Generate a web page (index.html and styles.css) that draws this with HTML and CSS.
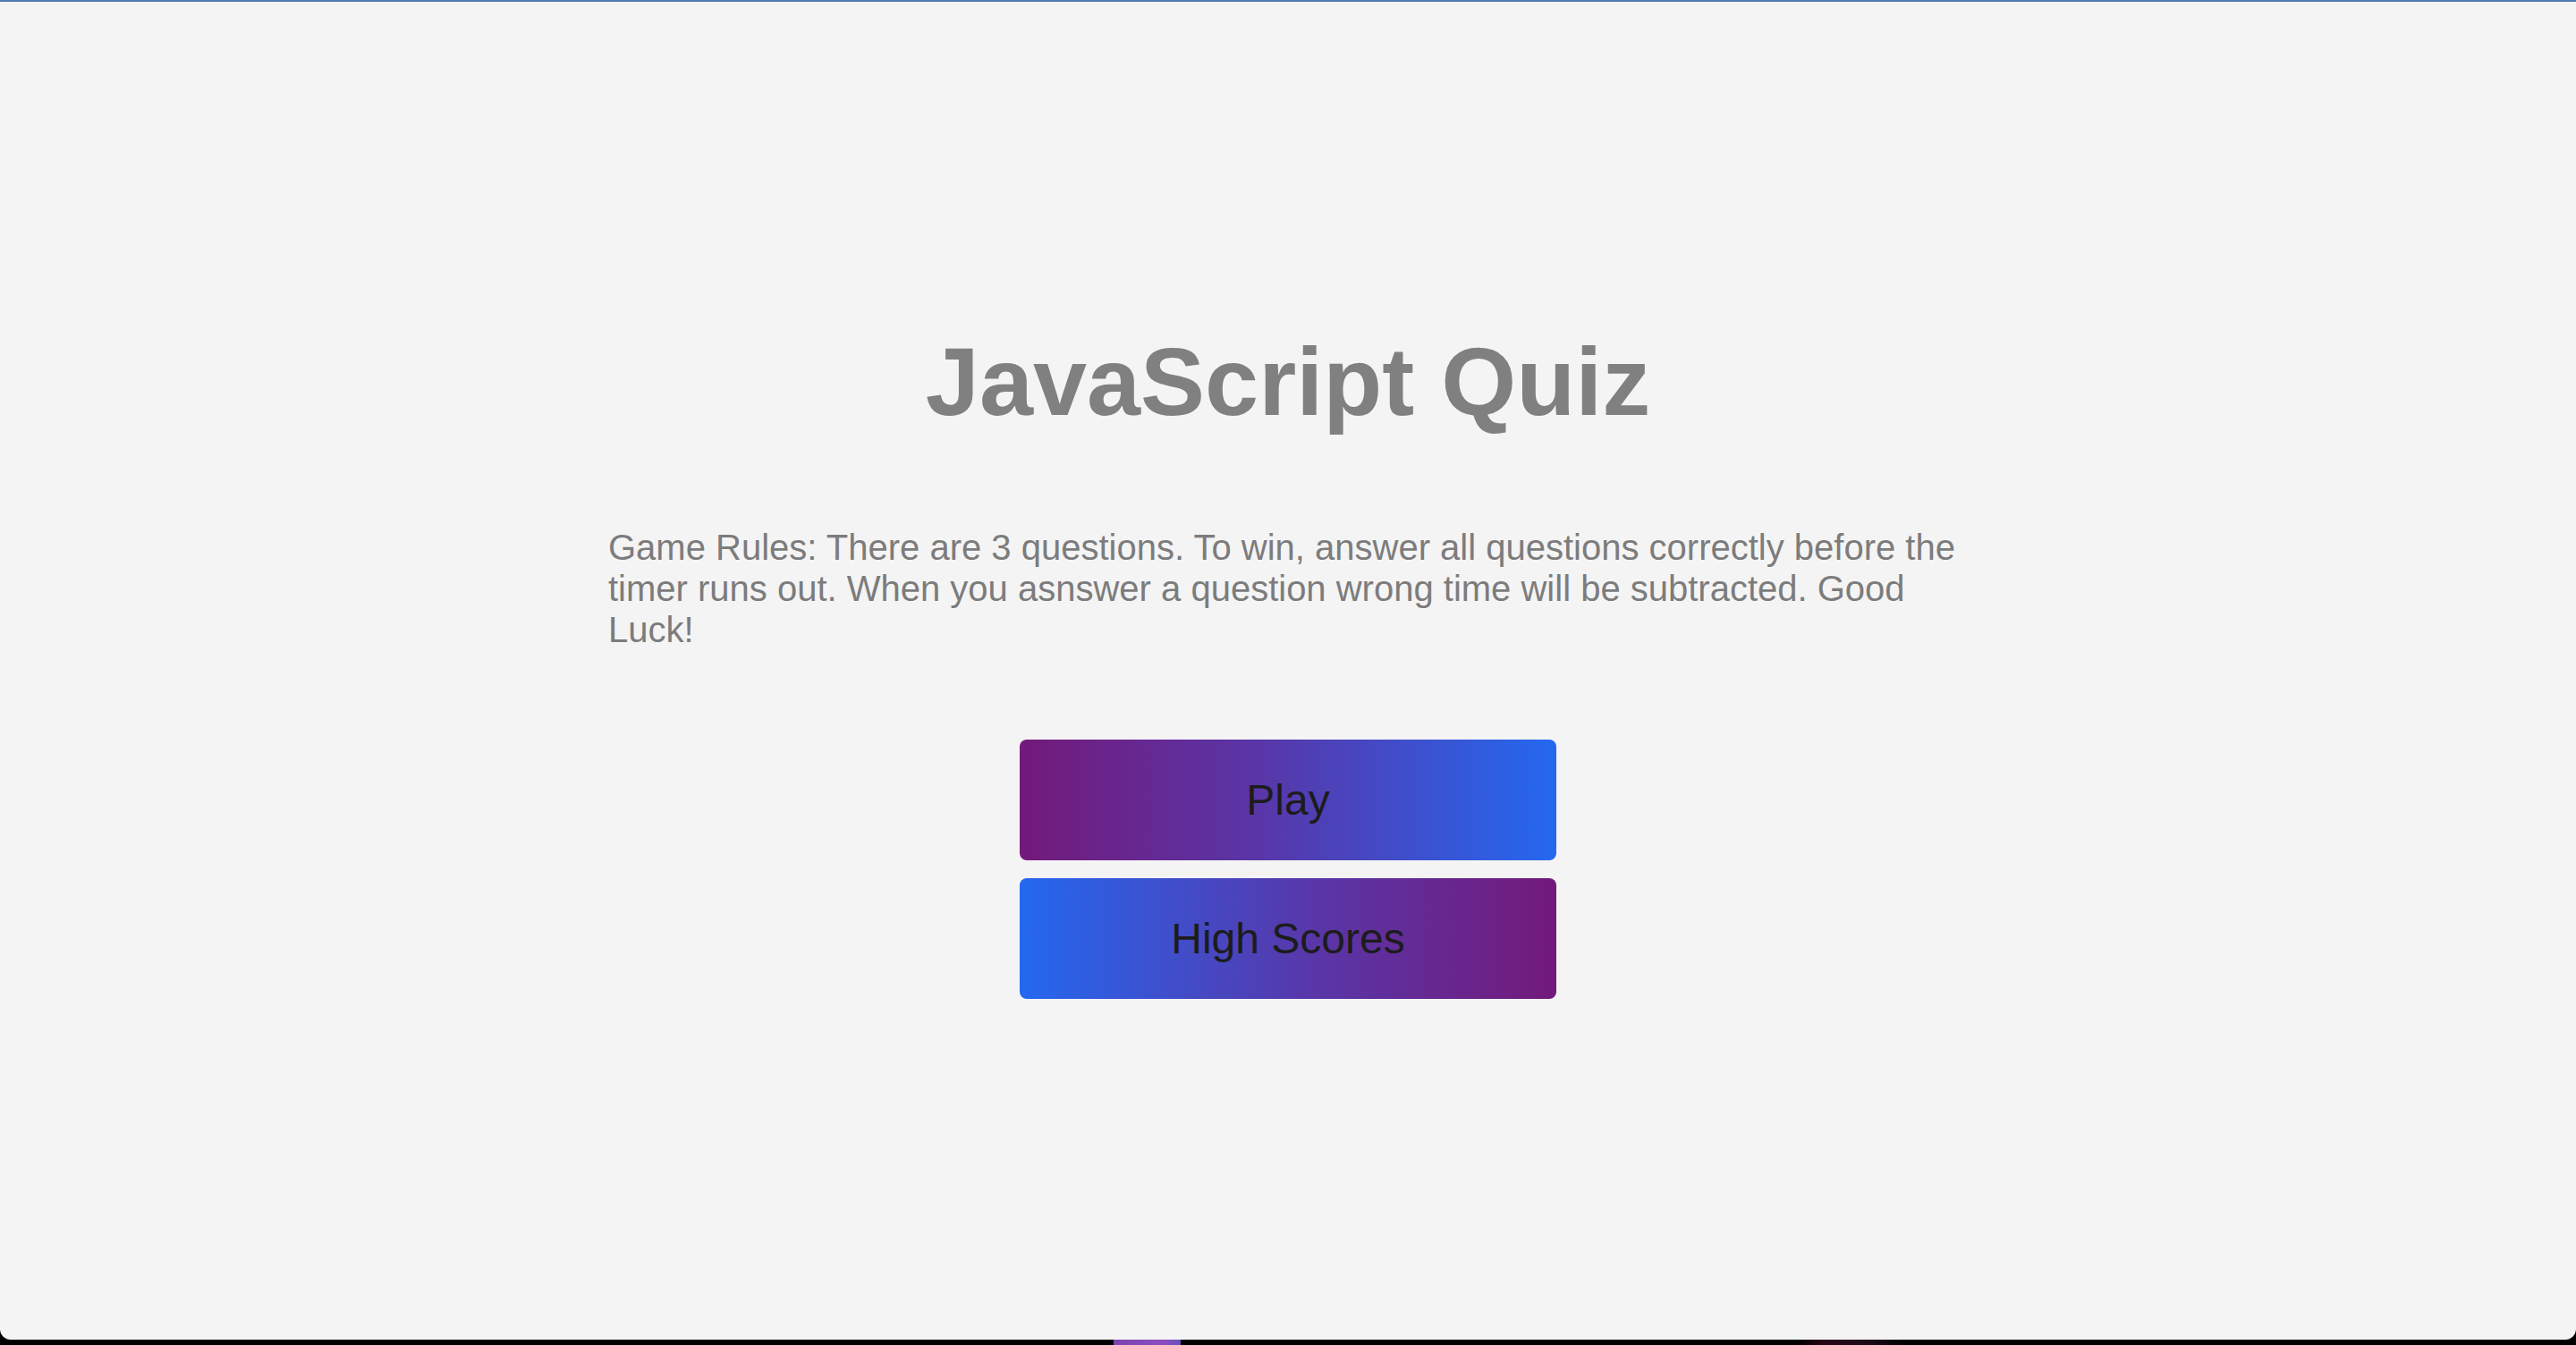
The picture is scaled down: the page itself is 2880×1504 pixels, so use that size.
FILE: index.html
```html
<!DOCTYPE html>
<html lang="en">
<head>
<meta charset="utf-8">
<title>JavaScript Quiz</title>
<link rel="stylesheet" href="styles.css">
</head>
<body>
<div class="window">
  <main class="home">
    <h1 class="title">JavaScript Quiz</h1>
    <p class="rules">Game Rules: There are 3 questions. To win, answer all questions correctly before the timer runs out. When you asnswer a question wrong time will be subtracted. Good Luck!</p>
    <div class="actions">
      <button class="btn btn-play">Play</button>
      <button class="btn btn-scores">High Scores</button>
    </div>
  </main>
</div>
<div class="dock-strip"></div>
</body>
</html>
```

FILE: styles.css
```css
html, body {
  margin: 0;
  padding: 0;
}

body {
  width: 2880px;
  height: 1504px;
  background: #000;
  overflow: hidden;
  font-family: "Liberation Sans", Arial, Helvetica, sans-serif;
}

.window {
  box-sizing: border-box;
  height: 1498px;
  background: #f4f4f4;
  border-top: 2px solid #4f7ab0;
  border-radius: 0 0 12px 12px;
  display: flex;
  flex-direction: column;
  align-items: center;
}

.home {
  display: flex;
  flex-direction: column;
  align-items: center;
  padding-top: 362px;
}

.title {
  margin: 0;
  font-size: 108px;
  font-weight: bold;
  line-height: normal;
  color: #808080;
  text-align: center;
}

.rules {
  box-sizing: border-box;
  width: 1520px;
  margin: 100px 0 0;
  font-size: 40px;
  line-height: 46px;
  color: #7c7c7c;
}

.actions {
  display: flex;
  flex-direction: column;
  gap: 20px;
  margin-top: 100px;
}

.btn {
  width: 600px;
  height: 135px;
  border: none;
  border-radius: 8px;
  font-family: "Liberation Sans", Arial, Helvetica, sans-serif;
  font-size: 48px;
  color: #1c1c1c;
  padding: 0;
  cursor: pointer;
}

.btn-play {
  background: linear-gradient(to right, #731a7a 0%, #5936a8 45%, #2468f0 100%);
}

.btn-scores {
  background: linear-gradient(to right, #2468f0 0%, #5936a8 55%, #731a7a 100%);
}

.dock-strip {
  height: 6px;
  background:
    linear-gradient(to right,
      transparent 0, transparent 1245px,
      #7b45b0 1245px, #8a4cc0 1300px, #6a50b8 1320px,
      transparent 1320px, transparent 100%),
    linear-gradient(to right,
      transparent 0, transparent 2010px,
      #2a0616 2040px, #1a0a18 2090px, transparent 2130px, transparent 100%),
    #000;
}
```
